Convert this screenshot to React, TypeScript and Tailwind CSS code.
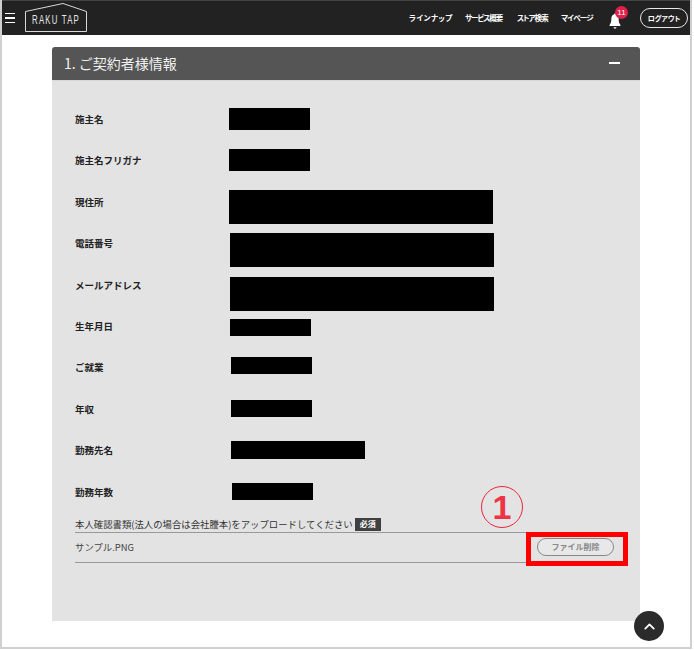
import React from "react";
import { ChevronUp } from "lucide-react";

const rows = [
  { label: "施主名", box: "ml-[154px] mt-0 w-[81px] h-[22px]" },
  { label: "施主名フリガナ", box: "ml-[154px] mt-0 w-[81px] h-[22px]" },
  { label: "現住所", box: "ml-[154px] mt-[-1px] w-[264px] h-[34px]" },
  { label: "電話番号", box: "ml-[155px] mt-px w-[264px] h-[34px]" },
  { label: "メールアドレス", box: "ml-[155px] mt-[3px] w-[264px] h-[34px]" },
  { label: "生年月日", box: "ml-[155px] mt-[4px] w-[81px] h-[17px]" },
  { label: "ご就業", box: "ml-[156px] mt-px w-[81px] h-[17px]" },
  { label: "年収", box: "ml-[156px] mt-[2px] w-[81px] h-[17px]" },
  { label: "勤務先名", box: "ml-[156px] mt-[2px] w-[134px] h-[18px]" },
  { label: "勤務年数", box: "ml-[157px] mt-[2px] w-[81px] h-[17px]" },
];

const navItems = [
  { t: "ラインナップ", c: "w-[44px] mr-[12px] tracking-[0.5px]" },
  { t: "サービス概要", c: "w-[39px] mr-[13px] tracking-[-1px]" },
  { t: "ストア検索", c: "w-[32px] mr-[12px] tracking-[-0.9px]" },
  { t: "マイページ", c: "w-[32px] mr-[16px] tracking-[-0.7px]" },
];

export default function App() {
  return (
    <div className="relative h-[650px] w-[694px] overflow-hidden bg-white font-['Noto_Sans_CJK_JP','Noto_Sans',sans-serif]">
      <div className="relative h-[649px] w-[692px] border-b-2 border-l-2 border-r-2 border-[#d0d0d0]">
        <header className="flex h-[35px] items-center border-t border-[#444] bg-[#222222] pr-[2px] text-white">
          <div className="ml-[3px] flex w-[10px] flex-col gap-[3px]">
            <span className="h-[1.5px] bg-white" />
            <span className="h-[1.5px] bg-white" />
            <span className="h-[1.5px] bg-white" />
          </div>
          <div className="relative ml-[10px] mt-[-1px] h-[29px] w-[62px]">
            <svg viewBox="0 0 62 29" className="h-[29px] w-[62px]" fill="none" stroke="#d8d8d8" strokeWidth="1">
              <path d="M0.5 8.5 L38 0.5 L61.5 8.5 V28.5 H0.5 Z" />
            </svg>
            <span className="absolute inset-x-[-20px] top-[11px] scale-x-[0.6] whitespace-nowrap text-center font-['Liberation_Sans',sans-serif] text-[13px] leading-[12px] tracking-[2px] text-[#e8e8e8]">
              RAKU TAP
            </span>
          </div>
          <nav className="ml-auto flex items-center text-[7.5px] font-bold leading-none [font-feature-settings:'palt']">
            {navItems.map((n) => (
              <span key={n.t} className={`whitespace-nowrap ${n.c}`}>
                {n.t}
              </span>
            ))}
          </nav>
          <div className="relative mr-[19px] h-[20px] w-[12px]">
            <svg viewBox="0 0 13 18" className="mt-[5px] h-[16px] w-[12px]" fill="#ffffff">
              <path d="M6.5 0.5c.7 0 1.1.5 1.1 1.2 2.2.5 3 2.4 3 4.6 0 3.2.5 5.3 2 7.2v1H.4v-1c1.5-1.9 2-4 2-7.2 0-2.2.8-4.1 3-4.6 0-.7.4-1.2 1.1-1.2z" />
              <path d="M4.8 16h3.4c0 1-.7 1.6-1.7 1.6S4.8 17 4.8 16z" />
            </svg>
            <span className="absolute left-[6px] top-[-2px] flex h-[13px] w-[13px] items-center justify-center rounded-full bg-[#e0204a] font-['Liberation_Sans',sans-serif] text-[8px] leading-none text-white">
              11
            </span>
          </div>
          <button className="flex h-[20px] w-[48px] items-center justify-center rounded-full border border-[#e8e8e8] text-[7px] font-bold leading-none text-white [font-feature-settings:'palt']">
            ログアウト
          </button>
        </header>

        <main className="ml-[50px] mt-[12px] w-[588px]">
          <div className="flex h-[33px] items-center justify-between rounded-t-[3px] bg-[#555555] pb-[1px] pl-[12px] pr-[20px] text-[14px] leading-none text-[#f0f0f0]">
            <span>1. ご契約者様情報</span>
            <span className="h-[2px] w-[11px] bg-white" />
          </div>
          <div className="h-[541px] border-t border-[#d8d8d8] bg-[#e3e3e3] pl-[23px] pr-[26px] pt-[27px]">
            {rows.map((r) => (
              <div key={r.label} className="flex h-[41.4px] items-start">
                <div className="w-0 shrink-0 whitespace-nowrap text-[9.5px] font-bold leading-[22px] text-[#222]">
                  {r.label}
                </div>
                <div className={`bg-black ${r.box}`} />
              </div>
            ))}
            <div className="mt-[-6px]">
              <div className="flex h-[17px] items-end border-b border-[#999] text-[9.4px] leading-[15px] text-[#333]">
                <span>本人確認書類(法人の場合は会社謄本)をアップロードしてください</span>
                <span className="mb-[1px] ml-[2px] flex h-[13px] w-[26px] items-center justify-center bg-[#404040] text-[8px] font-bold leading-none text-white">
                  必須
                </span>
              </div>
              <div className="flex h-[30px] items-center justify-between border-b border-[#999] text-[9.4px] text-[#444]">
                <span>サンプル.PNG</span>
                <button className="flex h-[18px] w-[77px] items-center justify-center rounded-full border border-[#888] bg-[#e8e8e8] text-[8px] font-bold leading-none text-[#888]">
                  ファイル削除
                </button>
              </div>
            </div>
          </div>
        </main>

        {/* 注釈 */}
        <div className="absolute left-[524px] top-[532px] h-[34px] w-[102px] border-[5px] border-[#ff0000]" />
        <div className="absolute left-[479px] top-[486px] flex h-[42px] w-[42px] items-center justify-center rounded-full border-[1.5px] border-[#ee2440] font-['Liberation_Sans',sans-serif] text-[34px] font-bold leading-none text-[#ee3344]">
          1
        </div>
        <button className="absolute left-[632px] top-[611px] flex h-[30px] w-[30px] items-center justify-center rounded-full bg-[#2b2b2b] text-white">
          <ChevronUp size={17} strokeWidth={2.5} />
        </button>
      </div>
    </div>
  );
}
